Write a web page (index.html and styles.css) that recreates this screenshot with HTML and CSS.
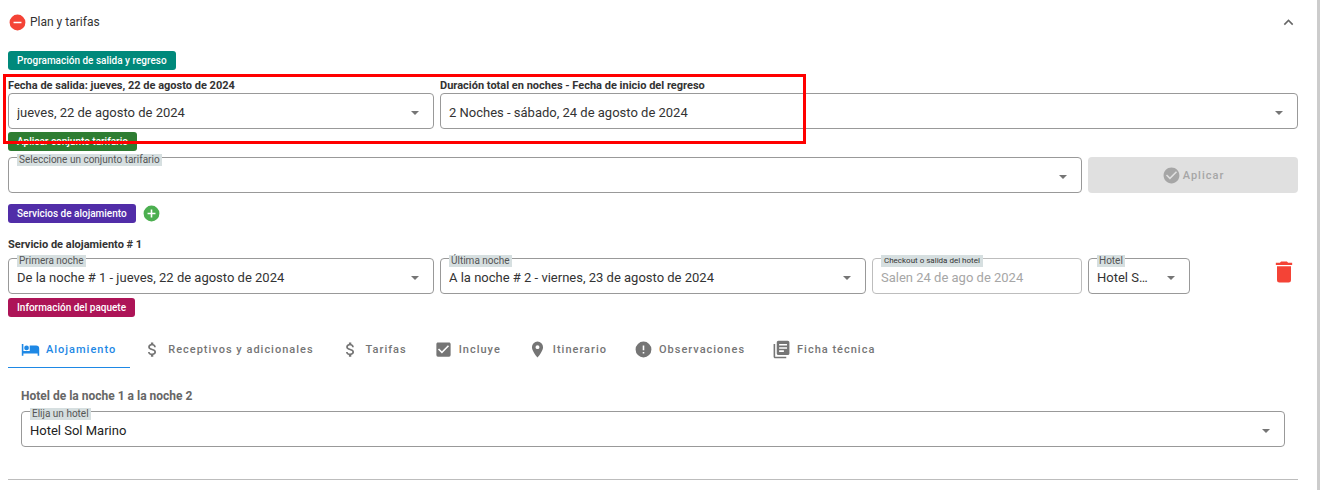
FILE: index.html
```html
<!DOCTYPE html>
<html lang="es">
<head>
<meta charset="utf-8">
<title>Plan y tarifas</title>
<link rel="stylesheet" href="styles.css">
</head>
<body>

<main class="panel">
  <header class="panel-header">
    <svg class="icon icon-remove" viewBox="0 0 24 24"><path d="M17,13H7V11H17M12,2A10,10 0 0,0 2,12A10,10 0 0,0 12,22A10,10 0 0,0 22,12A10,10 0 0,0 12,2Z"/></svg>
    <h1 class="panel-title">Plan y tarifas</h1>
    <button class="icon-btn" type="button" aria-label="Contraer">
      <svg class="icon icon-chevron" viewBox="0 0 24 24"><path d="M7.41,15.41L12,10.83L16.59,15.41L18,14L12,8L6,14L7.41,15.41Z"/></svg>
    </button>
  </header>

  <section class="block">
    <span class="chip teal">Programación de salida y regreso</span>
    <div class="grid dates">
      <div class="col-4">
        <label class="field-title" for="salida">Fecha de salida: jueves, 22 de agosto de 2024</label>
        <div class="field">
          <select id="salida" class="control"><option>jueves, 22 de agosto de 2024</option></select>
        </div>
      </div>
      <div class="col-8">
        <label class="field-title" for="duracion">Duración total en noches - Fecha de inicio del regreso</label>
        <div class="field">
          <select id="duracion" class="control"><option>2 Noches - sábado, 24 de agosto de 2024</option></select>
        </div>
      </div>
      <div class="highlight"></div>
    </div>
  </section>

  <section class="block">
    <span class="chip green">Aplicar conjunto tarifario</span>
    <div class="grid tariff">
      <div class="field outlined col-10">
        <label class="field-label" for="conjunto">Seleccione un conjunto tarifario</label>
        <select id="conjunto" class="control"><option></option></select>
      </div>
      <button class="apply col-2" type="button" disabled>
        <svg class="icon" viewBox="0 0 24 24"><path d="M12 2C6.5 2 2 6.5 2 12S6.5 22 12 22 22 17.5 22 12 17.5 2 12 2M10 17L5 12L6.41 10.59L10 14.17L17.59 6.58L19 8L10 17Z"/></svg>
        Aplicar
      </button>
    </div>
  </section>

  <section class="block lodging">
    <div class="chip-row">
      <span class="chip purple">Servicios de alojamiento</span>
      <button class="icon-btn" type="button" aria-label="Agregar servicio">
        <svg class="icon icon-add" viewBox="0 0 24 24"><path d="M17,13H13V17H11V13H7V11H11V7H13V11H17M12,2A10,10 0 0,0 2,12A10,10 0 0,0 12,22A10,10 0 0,0 22,12A10,10 0 0,0 12,2Z"/></svg>
      </button>
    </div>
    <h2 class="field-title service-title">Servicio de alojamiento # 1</h2>
    <div class="grid service">
      <div class="field outlined col-4">
        <label class="field-label" for="primera">Primera noche</label>
        <select id="primera" class="control"><option>De la noche # 1 - jueves, 22 de agosto de 2024</option></select>
      </div>
      <div class="field outlined col-4">
        <label class="field-label" for="ultima">Última noche</label>
        <select id="ultima" class="control"><option>A la noche # 2 - viernes, 23 de agosto de 2024</option></select>
      </div>
      <div class="field outlined plain col-2">
        <label class="field-label small" for="checkout">Checkout o salida del hotel</label>
        <input id="checkout" class="control" type="text" value="Salen 24 de ago de 2024" disabled>
      </div>
      <div class="field outlined col-1">
        <label class="field-label" for="hotel">Hotel</label>
        <select id="hotel" class="control"><option>Hotel Sol Marino</option></select>
      </div>
      <button class="icon-btn delete col-1" type="button" aria-label="Eliminar servicio">
        <svg class="icon icon-delete" viewBox="0 0 24 24"><path d="M19,4H15.5L14.5,3H9.5L8.5,4H5V6H19M6,19A2,2 0 0,0 8,21H16A2,2 0 0,0 18,19V7H6V19Z"/></svg>
      </button>
    </div>
  </section>

  <section class="block">
    <span class="chip magenta">Información del paquete</span>
    <nav class="tabs">
      <a class="tab active" href="#alojamiento">
        <svg class="icon" viewBox="0 0 24 24"><path d="M19,7H11V14H3V5H1V20H3V17H21V20H23V11A4,4 0 0,0 19,7M7,13A3,3 0 0,0 10,10A3,3 0 0,0 7,7A3,3 0 0,0 4,10A3,3 0 0,0 7,13Z"/></svg>
        Alojamiento
      </a>
      <a class="tab" href="#receptivos">
        <svg class="icon" viewBox="0 0 24 24"><path d="M11.8,10.9C9.53,10.31 8.8,9.7 8.8,8.75C8.8,7.66 9.81,6.9 11.5,6.9C13.28,6.9 13.94,7.75 14,9H16.21C16.14,7.28 15.09,5.7 13,5.19V3H10V5.16C8.06,5.58 6.5,6.84 6.5,8.77C6.5,11.08 8.41,12.23 11.2,12.9C13.7,13.5 14.2,14.38 14.2,15.31C14.2,16 13.71,17.1 11.5,17.1C9.44,17.1 8.63,16.18 8.5,15H6.32C6.44,17.19 8.08,18.42 10,18.83V21H13V18.85C14.95,18.5 16.5,17.35 16.5,15.3C16.5,12.46 14.07,11.5 11.8,10.9Z"/></svg>
        Receptivos y adicionales
      </a>
      <a class="tab" href="#tarifas">
        <svg class="icon" viewBox="0 0 24 24"><path d="M11.8,10.9C9.53,10.31 8.8,9.7 8.8,8.75C8.8,7.66 9.81,6.9 11.5,6.9C13.28,6.9 13.94,7.75 14,9H16.21C16.14,7.28 15.09,5.7 13,5.19V3H10V5.16C8.06,5.58 6.5,6.84 6.5,8.77C6.5,11.08 8.41,12.23 11.2,12.9C13.7,13.5 14.2,14.38 14.2,15.31C14.2,16 13.71,17.1 11.5,17.1C9.44,17.1 8.63,16.18 8.5,15H6.32C6.44,17.19 8.08,18.42 10,18.83V21H13V18.85C14.95,18.5 16.5,17.35 16.5,15.3C16.5,12.46 14.07,11.5 11.8,10.9Z"/></svg>
        Tarifas
      </a>
      <a class="tab" href="#incluye">
        <svg class="icon" viewBox="0 0 24 24"><path d="M10,17L5,12L6.41,10.58L10,14.17L17.59,6.58L19,8M19,3H5C3.89,3 3,3.89 3,5V19A2,2 0 0,0 5,21H19A2,2 0 0,0 21,19V5C21,3.89 20.1,3 19,3Z"/></svg>
        Incluye
      </a>
      <a class="tab" href="#itinerario">
        <svg class="icon" viewBox="0 0 24 24"><path d="M12,11.5A2.5,2.5 0 0,1 9.5,9A2.5,2.5 0 0,1 12,6.5A2.5,2.5 0 0,1 14.5,9A2.5,2.5 0 0,1 12,11.5M12,2A7,7 0 0,0 5,9C5,14.25 12,22 12,22C12,22 19,14.25 19,9A7,7 0 0,0 12,2Z"/></svg>
        Itinerario
      </a>
      <a class="tab" href="#observaciones">
        <svg class="icon" viewBox="0 0 24 24"><path d="M13,13H11V7H13M13,17H11V15H13M12,2A10,10 0 0,0 2,12A10,10 0 0,0 12,22A10,10 0 0,0 22,12A10,10 0 0,0 12,2Z"/></svg>
        Observaciones
      </a>
      <a class="tab" href="#ficha">
        <svg class="icon" viewBox="0 0 24 24"><path d="M19,7H9V5H19M15,15H9V13H15M19,11H9V9H19M20,1H8C6.9,1 6,1.9 6,3V17C6,18.1 6.9,19 8,19H20C21.1,19 22,18.1 22,17V3C22,1.9 21.1,1 20,1M4,5H2V21C2,22.1 2.9,23 4,23H18V21H4V5Z"/></svg>
        Ficha técnica
      </a>
    </nav>
    <div class="tab-content" id="alojamiento">
      <h2 class="hotel-title">Hotel de la noche 1 a la noche 2</h2>
      <div class="field outlined">
        <label class="field-label" for="elija">Elija un hotel</label>
        <select id="elija" class="control dark"><option>Hotel Sol Marino</option></select>
      </div>
    </div>
    <hr class="divider">
  </section>
</main>

</body>
</html>
```
FILE: styles.css
```css
* {
  box-sizing: border-box;
}

body {
  margin: 0;
  font-family: Roboto, "Liberation Sans", sans-serif;
  color: #333;
  background-color: #fff;
}

.panel {
  min-height: 100vh;
  padding: 0 19px 0 8px;
  border-right: 3px solid #ccc;
}

.panel-header {
  display: flex;
  align-items: center;
  height: 44px;
  margin-bottom: 7px;
}

.panel-title {
  flex: 1;
  margin: 0 0 0 3px;
  font-size: 12px;
  font-weight: 400;
}

.icon {
  width: 19px;
  height: 19px;
  fill: currentColor;
  flex-shrink: 0;
}

.icon-remove {
  color: #f44336;
}

.icon-chevron {
  color: #666;
}

.icon-add {
  color: #4caf50;
}

.icon-delete {
  width: 28px;
  height: 28px;
}

.icon-btn {
  display: flex;
  padding: 0;
  border: 0;
  background: none;
}

.chip {
  display: block;
  width: fit-content;
  height: 19px;
  padding: 0 9px;
  border-radius: 3px;
  color: #fff;
  font-size: 10px;
  font-weight: 500;
  line-height: 19px;
}

.teal {
  background-color: #00897b;
}

.green {
  background-color: #2e7d32;
}

.purple {
  background-color: #512da8;
}

.magenta {
  background-color: #ad1457;
}

.chip-row {
  display: flex;
  align-items: center;
  gap: 6px;
}

.grid {
  display: grid;
  grid-template-columns: repeat(12, 1fr);
  gap: 6px;
}

.col-1 { grid-column: span 1; }
.col-2 { grid-column: span 2; }
.col-4 { grid-column: span 4; }
.col-8 { grid-column: span 8; }
.col-10 { grid-column: span 10; }

.dates {
  position: relative;
  padding: 8px 0 3px;
}

.tariff {
  padding: 6px 0 11px;
}

.service {
  padding-bottom: 4px;
}

.field-title {
  display: block;
  margin: 0;
  font-size: 11px;
  font-weight: 700;
  line-height: 15px;
}

.service-title {
  padding: 14px 0 6px;
}

.field {
  position: relative;
  min-width: 0;
}

.field::after {
  content: "";
  position: absolute;
  top: 18px;
  right: 15px;
  border: 4px solid transparent;
  border-top-color: #757575;
  border-bottom: 0;
  pointer-events: none;
}

.plain::after {
  display: none;
}

.control {
  display: block;
  width: 100%;
  height: 36px;
  padding: 3px 36px 0 8px;
  border: 1px solid #999;
  border-radius: 4px;
  background-color: #fff;
  color: #333;
  font-family: inherit;
  font-size: 13px;
  text-overflow: ellipsis;
  appearance: none;
}

.control:disabled {
  border-color: #bdbdbd;
  color: #a6a6a6;
}

.control.dark {
  color: #222;
}

/* label sitting on the field outline */
.field-label {
  position: absolute;
  top: -3px;
  left: 9px;
  padding: 0 2px;
  background-color: #d6dfe0;
  color: #555;
  font-size: 10px;
  line-height: 12px;
}

.field-label.small {
  padding: 0 3px;
  color: #333;
  font-size: 8px;
}

.highlight {
  position: absolute;
  top: 4px;
  left: -5px;
  width: 803px;
  height: 70px;
  border: 3px solid #f00;
  pointer-events: none;
}

.apply {
  display: flex;
  align-items: center;
  justify-content: center;
  gap: 2px;
  border: 0;
  border-radius: 4px;
  background-color: #e0e0e0;
  color: #a6a6a6;
  font-family: inherit;
  font-size: 11px;
  font-weight: 500;
  letter-spacing: 1px;
}

.delete {
  justify-content: flex-end;
  color: #f44336;
}

.tabs {
  display: flex;
  margin-top: 14px;
}

.tab {
  display: flex;
  align-items: center;
  gap: 6px;
  height: 37px;
  padding: 0 14px 0 13px;
  border-bottom: 1px solid transparent;
  color: #757575;
  font-size: 11px;
  font-weight: 500;
  letter-spacing: 1px;
  text-decoration: none;
}

.tab.active {
  border-color: #1e88e5;
  color: #1e88e5;
}

.tab-content {
  padding: 20px 13px 32px;
}

.hotel-title {
  margin: 0 0 7px;
  color: #666;
  font-size: 12px;
  font-weight: 700;
  line-height: 16px;
}

.divider {
  margin: 0;
  border: 0;
  border-top: 1px solid #bdbdbd;
}
```
